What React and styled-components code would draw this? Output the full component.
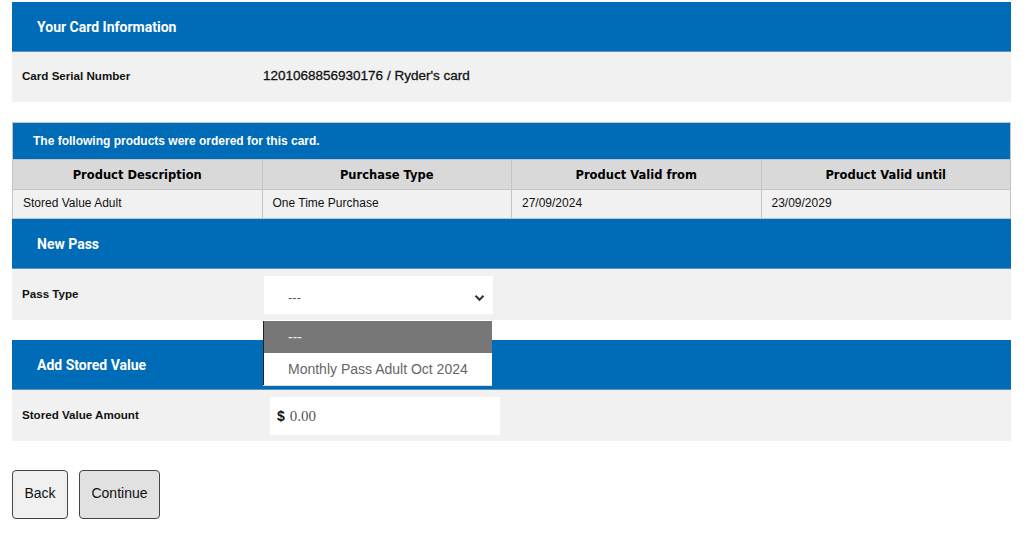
import React from 'react';
import styled, { createGlobalStyle } from 'styled-components';

const GlobalStyle = createGlobalStyle`
  html, body {
    margin: 0;
    padding: 0;
    background: #fff;
    font-family: "Liberation Sans", Arial, sans-serif;
  }
`;

const Page = styled.div`
  padding: 2px 17px 0 12px;
  width: 999px;
`;

const Section = styled.div`
  margin-bottom: ${p => p.gap || 0}px;
  position: relative;
`;

const SectionHeader = styled.div`
  height: 50px;
  background: #006bb6;
  color: #fff;
  display: flex;
  align-items: center;
  padding-left: 25px;
  font-family: Roboto, "Liberation Sans", sans-serif;
  font-weight: 700;
  font-size: 14px;
  border-bottom: 1px solid #5d93c4;
  box-sizing: border-box;
`;

const FieldRow = styled.div`
  height: ${p => p.h || 50}px;
  background: #f1f1f1;
  display: grid;
  grid-template-columns: 251px 1fr;
  align-items: center;
`;

const Label = styled.div`
  padding: 0 0 3px 10px;
  font-size: 11.6px;
  font-weight: 700;
  color: #111;
`;

const Value = styled.div`
  font-size: 13.5px;
  color: #111;
  -webkit-text-stroke: 0.3px #111;
  padding-bottom: 4px;
`;

const Table = styled.table`
  width: 100%;
  border-collapse: collapse;
  border: 1px solid #c4c4c4;
  font-size: 12px;
  table-layout: fixed;
`;

const Caption = styled.caption`
  background: #006bb6;
  color: #fff;
  text-align: left;
  font-weight: 700;
  font-size: 12px;
  height: 37px;
  padding: 0 0 0 20px;
  line-height: 37px;
  border: 1px solid #c4c4c4;
  border-bottom: none;
  box-sizing: border-box;
`;

const Th = styled.th`
  background: #d9d9d9;
  height: 30px;
  padding: 0;
  font-family: "DejaVu Sans", Verdana, sans-serif;
  font-size: 11.5px;
  font-weight: 700;
  color: #000;
  border: 1px solid #c4c4c4;
  box-sizing: border-box;
`;

const Td = styled.td`
  background: #f1f1f1;
  height: 29px;
  padding: 0 0 2px 10px;
  color: #111;
  border: 1px solid #c4c4c4;
  border-bottom: none;
  box-sizing: border-box;
`;

const SelectBox = styled.div`
  width: 229px;
  height: 38px;
  background: #fff;
  box-sizing: border-box;
  display: flex;
  align-items: center;
  justify-content: space-between;
  padding: 6px 8px 0 24px;
  font-size: 13px;
  color: #555;
  margin-left: 1px;
`;

const Dropdown = styled.div`
  position: absolute;
  left: 251px;
  top: 102px;
  width: 229px;
  background: #fff;
  border-left: 1px solid #222;
  box-sizing: border-box;
  z-index: 5;
  box-shadow: 0 1px 0 #ddd;
`;

const Option = styled.div`
  height: 32px;
  display: flex;
  align-items: center;
  padding-left: 24px;
  font-size: 14px;
  background: ${p => (p.active ? '#777' : '#fff')};
  color: ${p => (p.active ? '#eee' : '#666')};
`;

const AmountBox = styled.div`
  width: 230px;
  height: 38px;
  background: #fff;
  margin-left: 7px;
  display: flex;
  align-items: center;
  padding-left: 7px;
  box-sizing: border-box;
`;

const Dollar = styled.span`
  font-weight: 700;
  font-size: 14px;
  color: #111;
  margin-right: 5px;
`;

const Amount = styled.span`
  font-family: "Liberation Serif", "Times New Roman", serif;
  font-size: 15px;
  color: #555;
  padding-top: 2px;
`;

const Buttons = styled.div`
  display: flex;
  gap: 11px;
  margin-top: 29px;
`;

const Button = styled.button`
  height: 49px;
  width: ${p => p.w}px;
  padding: 0 0 3px;
  border: 1px solid #444;
  border-radius: 4px;
  background: ${p => p.bg || '#f0f0f0'};
  font-family: "Liberation Sans", Arial, sans-serif;
  font-size: 14px;
  color: #111;
  cursor: pointer;
`;

const Chevron = () => (
  <svg width="11" height="8" viewBox="0 0 11 8">
    <path d="M1.5 1.8 L5.5 5.8 L9.5 1.8" fill="none" stroke="#333" strokeWidth="2" />
  </svg>
);

const App = () => (
  <>
    <GlobalStyle />
    <Page>
      <Section gap={20}>
        <SectionHeader>Your Card Information</SectionHeader>
        <FieldRow>
          <Label>Card Serial Number</Label>
          <Value>1201068856930176 / Ryder's card</Value>
        </FieldRow>
      </Section>

      <Table>
        <Caption>The following products were ordered for this card.</Caption>
        <thead>
          <tr>
            <Th>Product Description</Th>
            <Th>Purchase Type</Th>
            <Th>Product Valid from</Th>
            <Th>Product Valid until</Th>
          </tr>
        </thead>
        <tbody>
          <tr>
            <Td>Stored Value Adult</Td>
            <Td>One Time Purchase</Td>
            <Td>27/09/2024</Td>
            <Td>23/09/2029</Td>
          </tr>
        </tbody>
      </Table>

      <Section gap={20}>
        <SectionHeader>New Pass</SectionHeader>
        <FieldRow h={51}>
          <Label>Pass Type</Label>
          <SelectBox>
            <span>---</span>
            <Chevron />
          </SelectBox>
        </FieldRow>
        <Dropdown>
          <Option active>---</Option>
          <Option>Monthly Pass Adult Oct 2024</Option>
        </Dropdown>
      </Section>

      <Section>
        <SectionHeader>Add Stored Value</SectionHeader>
        <FieldRow h={51}>
          <Label>Stored Value Amount</Label>
          <AmountBox>
            <Dollar>$</Dollar>
            <Amount>0.00</Amount>
          </AmountBox>
        </FieldRow>
      </Section>

      <Buttons>
        <Button w={56}>Back</Button>
        <Button w={81} bg="#e1e1e1">Continue</Button>
      </Buttons>
    </Page>
  </>
);

export default App;
